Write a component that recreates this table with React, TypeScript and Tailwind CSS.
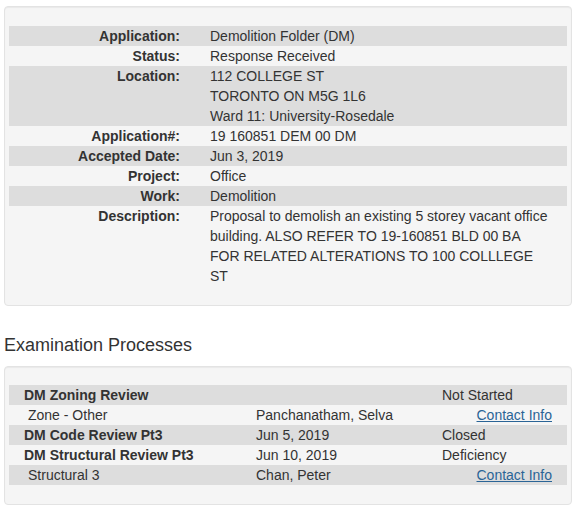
import React from "react";

const details: { label: string; lines: string[] }[] = [
  { label: "Application:", lines: ["Demolition Folder (DM)"] },
  { label: "Status:", lines: ["Response Received"] },
  {
    label: "Location:",
    lines: ["112 COLLEGE ST", "TORONTO ON M5G 1L6", "Ward 11: University-Rosedale"],
  },
  { label: "Application#:", lines: ["19 160851 DEM 00 DM"] },
  { label: "Accepted Date:", lines: ["Jun 3, 2019"] },
  { label: "Project:", lines: ["Office"] },
  { label: "Work:", lines: ["Demolition"] },
  {
    label: "Description:",
    lines: [
      "Proposal to demolish an existing 5 storey vacant office",
      "building. ALSO REFER TO 19-160851 BLD 00 BA",
      "FOR RELATED ALTERATIONS TO 100 COLLLEGE",
      "ST",
    ],
  },
];

type Proc = {
  name: string;
  sub?: boolean;
  second: string;
  third: string;
  link?: boolean;
};

const processes: Proc[] = [
  { name: "DM Zoning Review", second: "", third: "Not Started" },
  { name: "Zone - Other", sub: true, second: "Panchanatham, Selva", third: "Contact Info", link: true },
  { name: "DM Code Review Pt3", second: "Jun 5, 2019", third: "Closed" },
  { name: "DM Structural Review Pt3", second: "Jun 10, 2019", third: "Deficiency" },
  { name: "Structural 3", sub: true, second: "Chan, Peter", third: "Contact Info", link: true },
];

export default function App() {
  return (
    <div
      className="w-[575px] h-[510px] bg-white text-[#333] text-[14px] leading-[20px] overflow-hidden"
      style={{ fontFamily: '"Liberation Sans", Arial, sans-serif' }}
    >
      {/* Permit details */}
      <div className="ml-[4px] mt-[6px] w-[568px] border border-[#e3e3e3] rounded-[4px] bg-[#f5f5f5] shadow-[inset_0_1px_1px_rgba(0,0,0,0.05)] px-[4px] pt-[19px] pb-[19px]">
        {details.map((d, i) => (
          <div
            key={d.label}
            className={`flex ${i % 2 === 0 ? "bg-[#dddddd]" : ""}`}
          >
            <div className="w-[171px] text-right font-bold shrink-0">{d.label}</div>
            <div className="pl-[30px]">
              {d.lines.map((l) => (
                <div key={l} className="whitespace-nowrap">
                  {l}
                </div>
              ))}
            </div>
          </div>
        ))}
      </div>

      <h3 className="ml-[4px] mt-[29px] text-[18px] leading-[20px] font-normal">
        Examination Processes
      </h3>

      {/* Examination processes */}
      <div className="ml-[4px] mt-[11px] w-[568px] border border-[#e3e3e3] rounded-[4px] bg-[#f5f5f5] shadow-[inset_0_1px_1px_rgba(0,0,0,0.05)] px-[4px] pt-[18px] pb-[19px]">
        {processes.map((p, i) => (
          <div
            key={p.name}
            className={`grid grid-cols-[247px_186px_1fr] ${i % 2 === 0 ? "bg-[#dddddd]" : ""}`}
          >
            <div className={p.sub ? "pl-[19px]" : "pl-[15px] font-bold"}>{p.name}</div>
            <div>{p.second}</div>
            {p.link ? (
              <div className="text-right pr-[15px]">
                <a href="#" className="text-[#2a6496] underline">
                  {p.third}
                </a>
              </div>
            ) : (
              <div>{p.third}</div>
            )}
          </div>
        ))}
      </div>
    </div>
  );
}
